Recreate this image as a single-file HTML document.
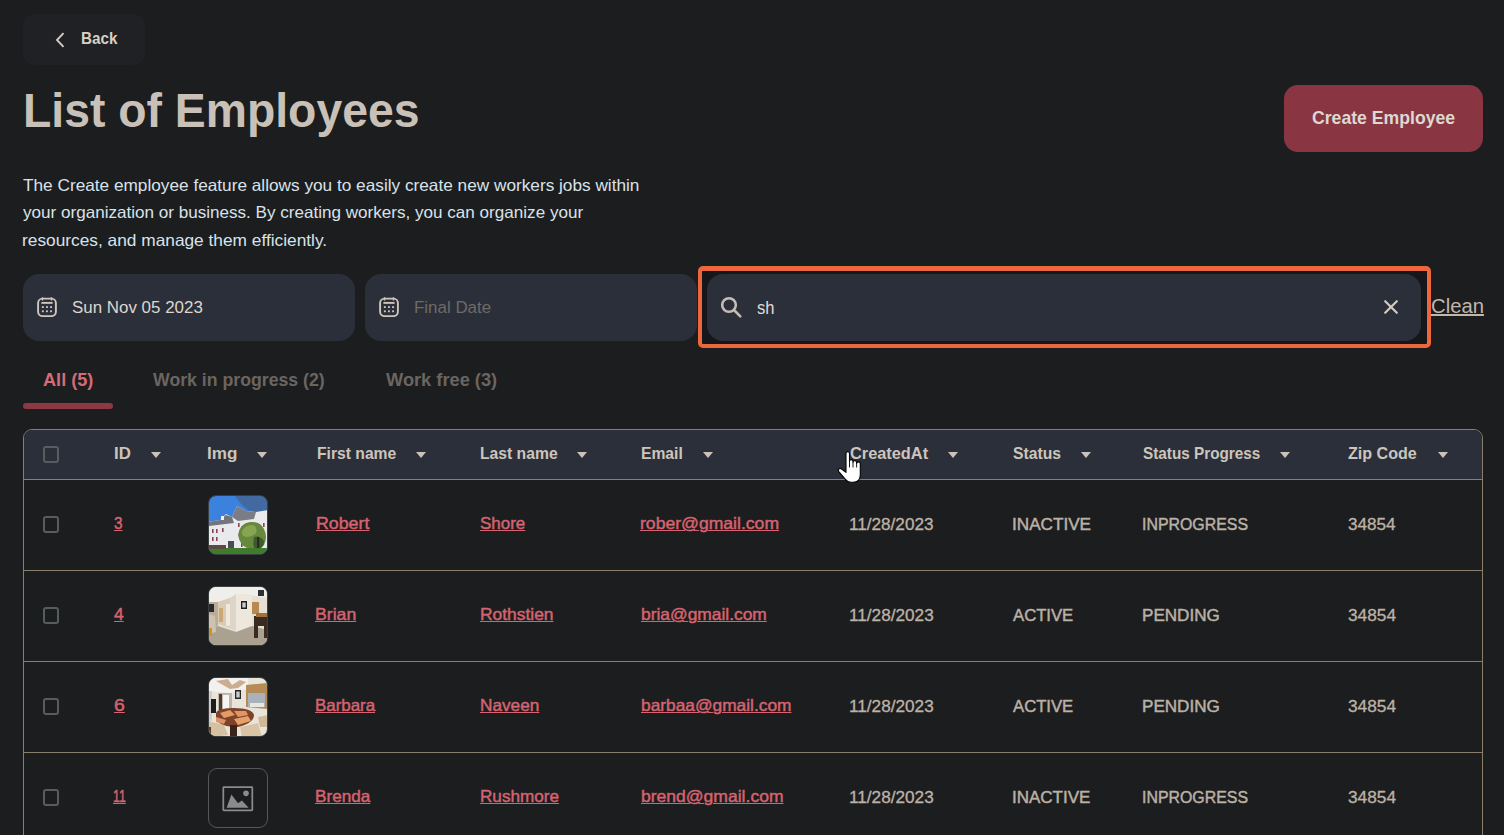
<!DOCTYPE html>
<html><head><meta charset="utf-8"><style>
html,body{margin:0;padding:0;}
body{width:1504px;height:835px;overflow:hidden;background:#1c1d1f;position:relative;font-family:"Liberation Sans",sans-serif;}
.t{position:absolute;white-space:nowrap;line-height:1;transform-origin:0 0;}
.u{text-decoration:underline;text-decoration-thickness:1.5px;text-underline-offset:2px;}
.box{position:absolute;}
.tri{position:absolute;width:0;height:0;border-left:5.2px solid transparent;border-right:5.2px solid transparent;border-top:6px solid #cbc3b9;}
.cb{position:absolute;width:12px;height:13px;border:2px solid #575c5e;border-radius:3px;}
.hl{position:absolute;left:23px;width:1459px;height:1.3px;background:#8a7e6c;}
.img{position:absolute;left:208px;width:58px;height:58px;border:1px solid #3c3f42;border-radius:8px;overflow:hidden;}
.img svg{display:block;width:58px;height:58px;}
</style></head><body>
<div class="box" style="left:23px;top:14px;width:122px;height:51px;border-radius:12px;background:#202124"></div>
<svg class="box" style="left:54px;top:31px" width="12" height="18" viewBox="0 0 12 18"><path d="M9.5 2.2L3 9l6.5 6.8" fill="none" stroke="#d4ccc2" stroke-width="1.9"/></svg>
<div class="box" style="left:1284px;top:85px;width:199px;height:67px;border-radius:14px;background:#8a3642"></div>
<div class="box" style="left:23px;top:274px;width:332px;height:67px;border-radius:16px;background:#2b2f3a"></div>
<div class="box" style="left:365px;top:274px;width:332px;height:67px;border-radius:16px;background:#2b2f3a"></div>
<div class="box" style="left:37px;top:297px"><svg width="20" height="20" viewBox="0 0 20 20" fill="none" stroke="#cfc6bc" stroke-width="1.9">
<rect x="1.1" y="1.6" width="17.8" height="17.5" rx="4.4"/><path d="M4.4 5.9h11.2" stroke-width="1.9"/>
<path d="M5.5 0.2v3.2M14.5 0.2v3.2" stroke-width="1.4"/>
<g fill="#cfc6bc" stroke="none"><rect x="4.9" y="9.2" width="1.9" height="1.8"/><rect x="9" y="9.2" width="1.9" height="1.8"/><rect x="13.1" y="9.2" width="1.9" height="1.8"/>
<rect x="4.9" y="13.4" width="1.9" height="1.8"/><rect x="9" y="13.4" width="1.9" height="1.8"/><rect x="13.1" y="13.4" width="1.9" height="1.8"/></g></svg></div>
<div class="box" style="left:379px;top:297px"><svg width="20" height="20" viewBox="0 0 20 20" fill="none" stroke="#cfc6bc" stroke-width="1.9">
<rect x="1.1" y="1.6" width="17.8" height="17.5" rx="4.4"/><path d="M4.4 5.9h11.2" stroke-width="1.9"/>
<path d="M5.5 0.2v3.2M14.5 0.2v3.2" stroke-width="1.4"/>
<g fill="#cfc6bc" stroke="none"><rect x="4.9" y="9.2" width="1.9" height="1.8"/><rect x="9" y="9.2" width="1.9" height="1.8"/><rect x="13.1" y="9.2" width="1.9" height="1.8"/>
<rect x="4.9" y="13.4" width="1.9" height="1.8"/><rect x="9" y="13.4" width="1.9" height="1.8"/><rect x="13.1" y="13.4" width="1.9" height="1.8"/></g></svg></div>
<div class="box" style="left:698px;top:266px;width:725px;height:73px;border:4px solid #ee673c;border-top-width:5px;border-radius:5px;background:#16171a"></div>
<div class="box" style="left:707px;top:274px;width:714px;height:67px;border-radius:16px;background:#2b2f3a"></div>
<svg class="box" style="left:718px;top:294px" width="26" height="26" viewBox="0 0 26 26" fill="none" stroke="#c5bdb2" stroke-width="2.6"><circle cx="11" cy="11" r="6.8"/><path d="M16 16l6.3 6.3" stroke-linecap="round"/></svg>
<svg class="box" style="left:1381px;top:297px" width="20" height="20" viewBox="0 0 20 20" stroke="#d3cbc1" stroke-width="2.2" stroke-linecap="round"><path d="M4.2 4.2l11.6 11.6M15.8 4.2l-11.6 11.6"/></svg>
<div class="box" style="left:23px;top:403px;width:90px;height:6px;border-radius:3px;background:#8d3945"></div>
<div class="box" style="left:23px;top:429px;width:1458px;height:420px;border:1px solid #8a7e6c;border-radius:9px 9px 0 0;overflow:hidden">
  <div style="position:absolute;left:0;top:0;width:100%;height:50px;background:#2b2f3a"></div>
</div>
<div class="hl" style="top:479px"></div><div class="hl" style="top:570px"></div><div class="hl" style="top:661px"></div><div class="hl" style="top:752px"></div>
<div class="cb" style="left:43px;top:446px"></div><div class="cb" style="left:43px;top:516px"></div><div class="cb" style="left:43px;top:607px"></div><div class="cb" style="left:43px;top:698px"></div><div class="cb" style="left:43px;top:789px"></div>
<div class="img" style="top:495px"><svg width="60" height="60" viewBox="1 1 58 58">
<rect width="60" height="60" fill="#3b82de"/>
<path d="M26 0 H60 V22 L44 18 L34 10 Z" fill="#4a5670" opacity="0.55"/>
<path d="M0 27 L12 25 L18 19 L24 22 L29 11 L38 16 L48 17 L60 15 L60 54 L0 54 Z" fill="#e9eaed"/>
<path d="M24 22 L29 11 L38 16 L48 17 L46 24 L30 26 Z" fill="#7b7d84"/>
<path d="M0 27 L12 25 L18 20 L24 22 L26 28 L0 31 Z" fill="#73757c"/>
<rect x="13" y="21" width="3" height="4" fill="#f0f0f0"/>
<g fill="#8a4552"><rect x="4" y="34" width="1.6" height="4"/><rect x="8" y="34" width="1.6" height="4"/><rect x="4" y="42" width="1.6" height="4"/><rect x="8" y="42" width="1.6" height="4"/><rect x="14" y="33" width="1.6" height="4"/><rect x="30" y="28" width="1.6" height="4"/><rect x="33" y="47" width="1.6" height="5"/><rect x="55" y="28" width="1.6" height="4"/></g>
<rect x="20" y="46" width="6" height="8" fill="#4a4c50"/>
<path d="M30 40 Q32 28 42 27 Q52 26 56 34 Q60 42 56 50 Q50 56 42 54 Q32 52 30 40 Z" fill="#66893d"/>
<path d="M34 36 Q38 29 45 30 Q50 32 48 38 Q44 42 38 42 Q33 41 34 36 Z" fill="#86a552"/>
<path d="M46 42 Q52 40 56 46 Q56 54 48 55 Q44 52 46 42 Z" fill="#3e5b2b"/>
<rect x="49" y="42" width="2.2" height="13" fill="#2c2822"/>
<rect x="0" y="53" width="60" height="7" fill="#3f7b2d"/>
<rect x="0" y="50" width="18" height="4" fill="#5a4b3d"/>
</svg></div>
<div class="img" style="top:586px"><svg width="60" height="60" viewBox="1 1 58 58">
<rect width="60" height="60" fill="#e6dfd3"/>
<path d="M0 0 H60 V12 L34 8 L22 12 L10 16 L0 18 Z" fill="#efeeeb"/>
<path d="M0 16 L10 16 L10 40 L0 44 Z" fill="#b9ac98"/>
<rect x="0" y="18" width="6" height="8" fill="#2a2a2c"/>
<path d="M10 16 L22 12 L22 42 L10 38 Z" fill="#d8ccb6"/>
<rect x="11" y="22" width="4" height="14" fill="#cda874"/>
<rect x="18" y="18" width="4" height="22" fill="#efe8dc"/>
<path d="M22 12 L28 8 L28 46 L22 42 Z" fill="#ddd5c8"/>
<path d="M28 8 L44 10 L44 40 L28 46 Z" fill="#ede7dc"/>
<rect x="33" y="15" width="6" height="8" fill="#1e1e1e"/><rect x="34.3" y="16.5" width="3.4" height="5" fill="#c8ccd0"/>
<rect x="44" y="16" width="7" height="12" fill="#b88a52"/>
<path d="M0 44 L10 40 L28 46 L44 40 L60 44 V60 H0 Z" fill="#aaa190"/>
<path d="M0 28 L7 30 L8 46 L0 48 Z" fill="#cfc3ad"/>
<rect x="0" y="42" width="4" height="8" fill="#c9962e"/>
<path d="M46 30 H60 V52 H56 V40 H50 V52 H46 Z" fill="#3a2a20"/>
<rect x="48" y="27" width="12" height="4" fill="#a0703e"/>
<rect x="50" y="4" width="6" height="6" fill="#2f2f2f"/>
</svg></div>
<div class="img" style="top:677px"><svg width="60" height="60" viewBox="1 1 58 58">
<rect width="60" height="60" fill="#e9e4da"/>
<path d="M0 0 H40 V12 L22 16 L0 14 Z" fill="#f2f1ee"/>
<path d="M8 4 L20 2 L24 8 L32 3 L38 5 L30 11 L22 12 Z" fill="#c3a27e" opacity="0.85"/>
<rect x="0" y="14" width="4" height="30" fill="#d2ccc2"/>
<rect x="3" y="22" width="5" height="14" fill="#1d1d20"/>
<rect x="10" y="16" width="14" height="18" fill="#beb7ad"/>
<rect x="11" y="17" width="3" height="16" fill="#4a3a30"/>
<rect x="15" y="18" width="6" height="14" fill="#f5f5f3"/>
<rect x="27" y="13" width="6" height="9" fill="#282828"/><rect x="28.3" y="14.5" width="3.4" height="6" fill="#c8cccc"/>
<path d="M38 8 L60 6 V32 L38 30 Z" fill="#b58c58"/>
<rect x="40" y="16" width="17" height="14" fill="#aab1b8"/>
<rect x="42" y="26" width="14" height="4" fill="#e8e6e0"/>
<path d="M8 36 Q10 31 26 31 Q44 31 46 38 Q46 46 30 50 Q12 50 8 42 Z" fill="#7e4328"/>
<path d="M12 36 L22 33 L27 38 L16 41 Z" fill="#e39c68"/>
<path d="M26 34 L38 34 L40 38 L30 40 Z" fill="#df9763"/>
<path d="M26 42 L40 39 L43 44 L30 48 Z" fill="#e6a16a"/>
<path d="M8 40 L18 43 L16 47 L8 45 Z" fill="#dc9467"/>
<path d="M0 44 L16 48 L20 58 L6 60 H0 Z" fill="#d5c0a2"/>
<path d="M32 50 L50 46 L54 60 H34 Z" fill="#d9c5a6"/>
<path d="M50 40 L60 38 V50 L52 50 Z" fill="#cfb999"/>
<rect x="22" y="48" width="7" height="12" fill="#3a2418"/>
<rect x="0" y="50" width="3" height="10" fill="#5a3a28"/>
</svg></div>
<div class="img" style="top:768px;border-color:#54585a;border-width:1.3px;border-radius:9px"><svg width="60" height="60" viewBox="0 0 60 60">
<rect x="14.8" y="18.8" width="30" height="24" fill="none" stroke="#8b8b8b" stroke-width="1.8" rx="0.6"/>
<path d="M18.2 40 L23.2 26.5 L30 35.5 L34 32.5 L41 40 Z" fill="#8b8b8b"/>
<circle cx="38.3" cy="25.2" r="2.9" fill="#8b8b8b"/>
</svg></div>
<div class="tri" style="left:151px;top:452px"></div>
<div class="tri" style="left:257px;top:452px"></div>
<div class="tri" style="left:416px;top:452px"></div>
<div class="tri" style="left:577px;top:452px"></div>
<div class="tri" style="left:703px;top:452px"></div>
<div class="tri" style="left:948px;top:452px"></div>
<div class="tri" style="left:1081px;top:452px"></div>
<div class="tri" style="left:1280px;top:452px"></div>
<div class="tri" style="left:1438px;top:452px"></div>
<div id="back" class="t" style="left:80.87px;top:29.62px;font-size:17px;font-weight:bold;color:#d8d0c6;transform:scaleX(0.8960);">Back</div>
<div id="title" class="t" style="left:23.10px;top:87.39px;font-size:48px;font-weight:bold;color:#c9c1b8;transform:scaleX(0.9651);">List of Employees</div>
<div id="p1" class="t" style="left:23.00px;top:176.64px;font-size:16.5px;font-weight:normal;color:#d9e2ea;transform:scaleX(1.0437);">The Create employee feature allows you to easily create new workers jobs within</div>
<div id="p2" class="t" style="left:23.00px;top:204.04px;font-size:16.5px;font-weight:normal;color:#d9e2ea;transform:scaleX(1.0351);">your organization or business. By creating workers, you can organize your</div>
<div id="p3" class="t" style="left:21.95px;top:231.64px;font-size:16.5px;font-weight:normal;color:#d9e2ea;transform:scaleX(1.0484);">resources, and manage them efficiently.</div>
<div id="create" class="t" style="left:1312.00px;top:109.35px;font-size:18.5px;font-weight:bold;color:#ded8d2;transform:scaleX(0.9533);">Create Employee</div>
<div id="sun" class="t" style="left:72.02px;top:299.40px;font-size:17.2px;font-weight:normal;color:#ddd6cf;transform:scaleX(0.9848);">Sun Nov 05 2023</div>
<div id="final" class="t" style="left:414.21px;top:299.40px;font-size:17.2px;font-weight:normal;color:#6e6a66;transform:scaleX(0.9847);">Final Date</div>
<div id="sh" class="t" style="left:757.00px;top:299.69px;font-size:17.5px;font-weight:normal;color:#e0dcd6;transform:scaleX(0.9483);">sh</div>
<div id="clean" class="t" style="left:1430.62px;top:296.16px;font-size:20.5px;font-weight:normal;color:#c2b7ac;transform:scaleX(0.9888);text-decoration:underline;text-decoration-thickness:2px;text-underline-offset:1px;">Clean</div>
<div id="tab1" class="t" style="left:43.00px;top:371.35px;font-size:18.5px;font-weight:bold;color:#d56b77;transform:scaleX(0.9804);">All (5)</div>
<div id="tab2" class="t" style="left:153.00px;top:371.35px;font-size:18.5px;font-weight:bold;color:#6b6560;transform:scaleX(0.9564);">Work in progress (2)</div>
<div id="tab3" class="t" style="left:385.59px;top:371.35px;font-size:18.5px;font-weight:bold;color:#6b6560;transform:scaleX(0.9858);">Work free (3)</div>
<div id="h0" class="t" style="left:113.98px;top:445.04px;font-size:16.5px;font-weight:bold;color:#cdc5bb;transform:scaleX(1.0191);">ID</div>
<div id="h1" class="t" style="left:207.17px;top:445.04px;font-size:16.5px;font-weight:bold;color:#cdc5bb;transform:scaleX(1.0376);">Img</div>
<div id="h2" class="t" style="left:316.63px;top:445.04px;font-size:16.5px;font-weight:bold;color:#cdc5bb;transform:scaleX(0.9496);">First name</div>
<div id="h3" class="t" style="left:480.11px;top:445.04px;font-size:16.5px;font-weight:bold;color:#cdc5bb;transform:scaleX(0.9509);">Last name</div>
<div id="h4" class="t" style="left:641.05px;top:445.04px;font-size:16.5px;font-weight:bold;color:#cdc5bb;transform:scaleX(0.9485);">Email</div>
<div id="h5" class="t" style="left:849.75px;top:445.04px;font-size:16.5px;font-weight:bold;color:#cdc5bb;transform:scaleX(0.9901);">CreatedAt</div>
<div id="h6" class="t" style="left:1012.52px;top:445.04px;font-size:16.5px;font-weight:bold;color:#cdc5bb;transform:scaleX(0.9524);">Status</div>
<div id="h7" class="t" style="left:1142.53px;top:445.04px;font-size:16.5px;font-weight:bold;color:#cdc5bb;transform:scaleX(0.9271);">Status Progress</div>
<div id="h8" class="t" style="left:1347.90px;top:445.04px;font-size:16.5px;font-weight:bold;color:#cdc5bb;transform:scaleX(0.9747);">Zip Code</div>
<div id="r0c0" class="t" style="left:114.30px;top:515.24px;font-size:16.5px;font-weight:normal;color:#d6636f;transform:scaleX(0.9283);text-decoration:underline;text-decoration-thickness:1.3px;text-underline-offset:0.8px;"><span style="-webkit-text-stroke:0.45px currentColor">3</span></div>
<div id="r0c1" class="t" style="left:315.92px;top:515.24px;font-size:16.5px;font-weight:normal;color:#d6636f;transform:scaleX(1.0772);text-decoration:underline;text-decoration-thickness:1.3px;text-underline-offset:0.8px;"><span style="-webkit-text-stroke:0.45px currentColor">Robert</span></div>
<div id="r0c2" class="t" style="left:479.98px;top:515.24px;font-size:16.5px;font-weight:normal;color:#d6636f;transform:scaleX(1.0279);text-decoration:underline;text-decoration-thickness:1.3px;text-underline-offset:0.8px;"><span style="-webkit-text-stroke:0.45px currentColor">Shore</span></div>
<div id="r0c3" class="t" style="left:640.13px;top:515.24px;font-size:16.5px;font-weight:normal;color:#d6636f;transform:scaleX(1.0657);text-decoration:underline;text-decoration-thickness:1.3px;text-underline-offset:0.8px;"><span style="-webkit-text-stroke:0.45px currentColor">rober@gmail.com</span></div>
<div id="r0c4" class="t" style="left:848.91px;top:516.72px;font-size:15.7px;font-weight:normal;color:#bcb2a6;transform:scaleX(1.0921);-webkit-text-stroke:0.3px currentColor;">11/28/2023</div>
<div id="r0c5" class="t" style="left:1012.23px;top:517.46px;font-size:16px;font-weight:normal;color:#bbb1a5;transform:scaleX(1.0707);-webkit-text-stroke:0.45px currentColor;">INACTIVE</div>
<div id="r0c6" class="t" style="left:1142.01px;top:517.46px;font-size:16px;font-weight:normal;color:#bbb1a5;transform:scaleX(0.9935);-webkit-text-stroke:0.45px currentColor;">INPROGRESS</div>
<div id="r0c7" class="t" style="left:1348.16px;top:516.72px;font-size:15.7px;font-weight:normal;color:#bcb2a6;transform:scaleX(1.0923);-webkit-text-stroke:0.3px currentColor;">34854</div>
<div id="r1c0" class="t" style="left:113.94px;top:606.24px;font-size:16.5px;font-weight:normal;color:#d6636f;transform:scaleX(1.0575);text-decoration:underline;text-decoration-thickness:1.3px;text-underline-offset:0.8px;"><span style="-webkit-text-stroke:0.45px currentColor">4</span></div>
<div id="r1c1" class="t" style="left:315.33px;top:606.24px;font-size:16.5px;font-weight:normal;color:#d6636f;transform:scaleX(1.0694);text-decoration:underline;text-decoration-thickness:1.3px;text-underline-offset:0.8px;"><span style="-webkit-text-stroke:0.45px currentColor">Brian</span></div>
<div id="r1c2" class="t" style="left:479.72px;top:606.24px;font-size:16.5px;font-weight:normal;color:#d6636f;transform:scaleX(1.0549);text-decoration:underline;text-decoration-thickness:1.3px;text-underline-offset:0.8px;"><span style="-webkit-text-stroke:0.45px currentColor">Rothstien</span></div>
<div id="r1c3" class="t" style="left:640.78px;top:606.24px;font-size:16.5px;font-weight:normal;color:#d6636f;transform:scaleX(1.0535);text-decoration:underline;text-decoration-thickness:1.3px;text-underline-offset:0.8px;"><span style="-webkit-text-stroke:0.45px currentColor">bria@gmail.com</span></div>
<div id="r1c4" class="t" style="left:848.66px;top:607.72px;font-size:15.7px;font-weight:normal;color:#bcb2a6;transform:scaleX(1.0951);-webkit-text-stroke:0.3px currentColor;">11/28/2023</div>
<div id="r1c5" class="t" style="left:1013.00px;top:608.46px;font-size:16px;font-weight:normal;color:#bbb1a5;transform:scaleX(1.0425);-webkit-text-stroke:0.45px currentColor;">ACTIVE</div>
<div id="r1c6" class="t" style="left:1141.62px;top:608.46px;font-size:16px;font-weight:normal;color:#bbb1a5;transform:scaleX(1.0667);-webkit-text-stroke:0.45px currentColor;">PENDING</div>
<div id="r1c7" class="t" style="left:1348.17px;top:607.72px;font-size:15.7px;font-weight:normal;color:#bcb2a6;transform:scaleX(1.0998);-webkit-text-stroke:0.3px currentColor;">34854</div>
<div id="r2c0" class="t" style="left:113.71px;top:697.24px;font-size:16.5px;font-weight:normal;color:#d6636f;transform:scaleX(1.1750);text-decoration:underline;text-decoration-thickness:1.3px;text-underline-offset:0.8px;"><span style="-webkit-text-stroke:0.45px currentColor">6</span></div>
<div id="r2c1" class="t" style="left:315.39px;top:697.24px;font-size:16.5px;font-weight:normal;color:#d6636f;transform:scaleX(1.0240);text-decoration:underline;text-decoration-thickness:1.3px;text-underline-offset:0.8px;"><span style="-webkit-text-stroke:0.45px currentColor">Barbara</span></div>
<div id="r2c2" class="t" style="left:479.75px;top:697.24px;font-size:16.5px;font-weight:normal;color:#d6636f;transform:scaleX(1.0428);text-decoration:underline;text-decoration-thickness:1.3px;text-underline-offset:0.8px;"><span style="-webkit-text-stroke:0.45px currentColor">Naveen</span></div>
<div id="r2c3" class="t" style="left:640.77px;top:697.24px;font-size:16.5px;font-weight:normal;color:#d6636f;transform:scaleX(1.0501);text-decoration:underline;text-decoration-thickness:1.3px;text-underline-offset:0.8px;"><span style="-webkit-text-stroke:0.45px currentColor">barbaa@gmail.com</span></div>
<div id="r2c4" class="t" style="left:848.66px;top:698.72px;font-size:15.7px;font-weight:normal;color:#bcb2a6;transform:scaleX(1.0951);-webkit-text-stroke:0.3px currentColor;">11/28/2023</div>
<div id="r2c5" class="t" style="left:1013.00px;top:699.46px;font-size:16px;font-weight:normal;color:#bbb1a5;transform:scaleX(1.0425);-webkit-text-stroke:0.45px currentColor;">ACTIVE</div>
<div id="r2c6" class="t" style="left:1141.62px;top:699.46px;font-size:16px;font-weight:normal;color:#bbb1a5;transform:scaleX(1.0667);-webkit-text-stroke:0.45px currentColor;">PENDING</div>
<div id="r2c7" class="t" style="left:1348.17px;top:698.72px;font-size:15.7px;font-weight:normal;color:#bcb2a6;transform:scaleX(1.0998);-webkit-text-stroke:0.3px currentColor;">34854</div>
<div id="r3c0" class="t" style="left:113.09px;top:788.24px;font-size:16.5px;font-weight:normal;color:#d6636f;transform:scaleX(0.7467);text-decoration:underline;text-decoration-thickness:1.3px;text-underline-offset:0.8px;"><span style="-webkit-text-stroke:0.45px currentColor">11</span></div>
<div id="r3c1" class="t" style="left:315.37px;top:788.24px;font-size:16.5px;font-weight:normal;color:#d6636f;transform:scaleX(1.0383);text-decoration:underline;text-decoration-thickness:1.3px;text-underline-offset:0.8px;"><span style="-webkit-text-stroke:0.45px currentColor">Brenda</span></div>
<div id="r3c2" class="t" style="left:479.77px;top:788.24px;font-size:16.5px;font-weight:normal;color:#d6636f;transform:scaleX(1.0376);text-decoration:underline;text-decoration-thickness:1.3px;text-underline-offset:0.8px;"><span style="-webkit-text-stroke:0.45px currentColor">Rushmore</span></div>
<div id="r3c3" class="t" style="left:640.77px;top:788.24px;font-size:16.5px;font-weight:normal;color:#d6636f;transform:scaleX(1.0623);text-decoration:underline;text-decoration-thickness:1.3px;text-underline-offset:0.8px;"><span style="-webkit-text-stroke:0.45px currentColor">brend@gmail.com</span></div>
<div id="r3c4" class="t" style="left:848.66px;top:789.72px;font-size:15.7px;font-weight:normal;color:#bcb2a6;transform:scaleX(1.0951);-webkit-text-stroke:0.3px currentColor;">11/28/2023</div>
<div id="r3c5" class="t" style="left:1011.94px;top:790.46px;font-size:16px;font-weight:normal;color:#bbb1a5;transform:scaleX(1.0617);-webkit-text-stroke:0.45px currentColor;">INACTIVE</div>
<div id="r3c6" class="t" style="left:1142.01px;top:790.46px;font-size:16px;font-weight:normal;color:#bbb1a5;transform:scaleX(0.9935);-webkit-text-stroke:0.45px currentColor;">INPROGRESS</div>
<div id="r3c7" class="t" style="left:1348.17px;top:789.72px;font-size:15.7px;font-weight:normal;color:#bcb2a6;transform:scaleX(1.0998);-webkit-text-stroke:0.3px currentColor;">34854</div>
<svg class="box" style="left:830px;top:440px" width="47" height="47" viewBox="0 0 47 47">
<path d="M16 13.6 Q16 11.6 17.7 11.6 Q19.5 11.6 19.5 13.6 L19.5 21.2 Q19.5 19.6 21.2 19.6 Q23 19.6 23 21.4 L23 22.3 Q23 20.7 24.8 20.7 Q26.6 20.7 26.6 22.5 L26.6 23.5 Q26.6 21.9 28.4 21.9 Q30.3 21.9 30.3 23.8 L30.3 34.5 Q30.3 42.3 23 42.3 L20.8 42.3 Q17.8 42.3 15.4 39.3 L8.8 31.6 Q7.6 30.1 8.8 29 Q10.1 27.9 11.6 29 L16 32.3 Z" fill="#ffffff" stroke="#000" stroke-width="1.1" stroke-linejoin="round"/>
<path d="M19.5 21 V27.5 M23 22.2 V27.5 M26.6 23.4 V27.5" stroke="#000" stroke-width="0.9"/>
</svg>
</body></html>
